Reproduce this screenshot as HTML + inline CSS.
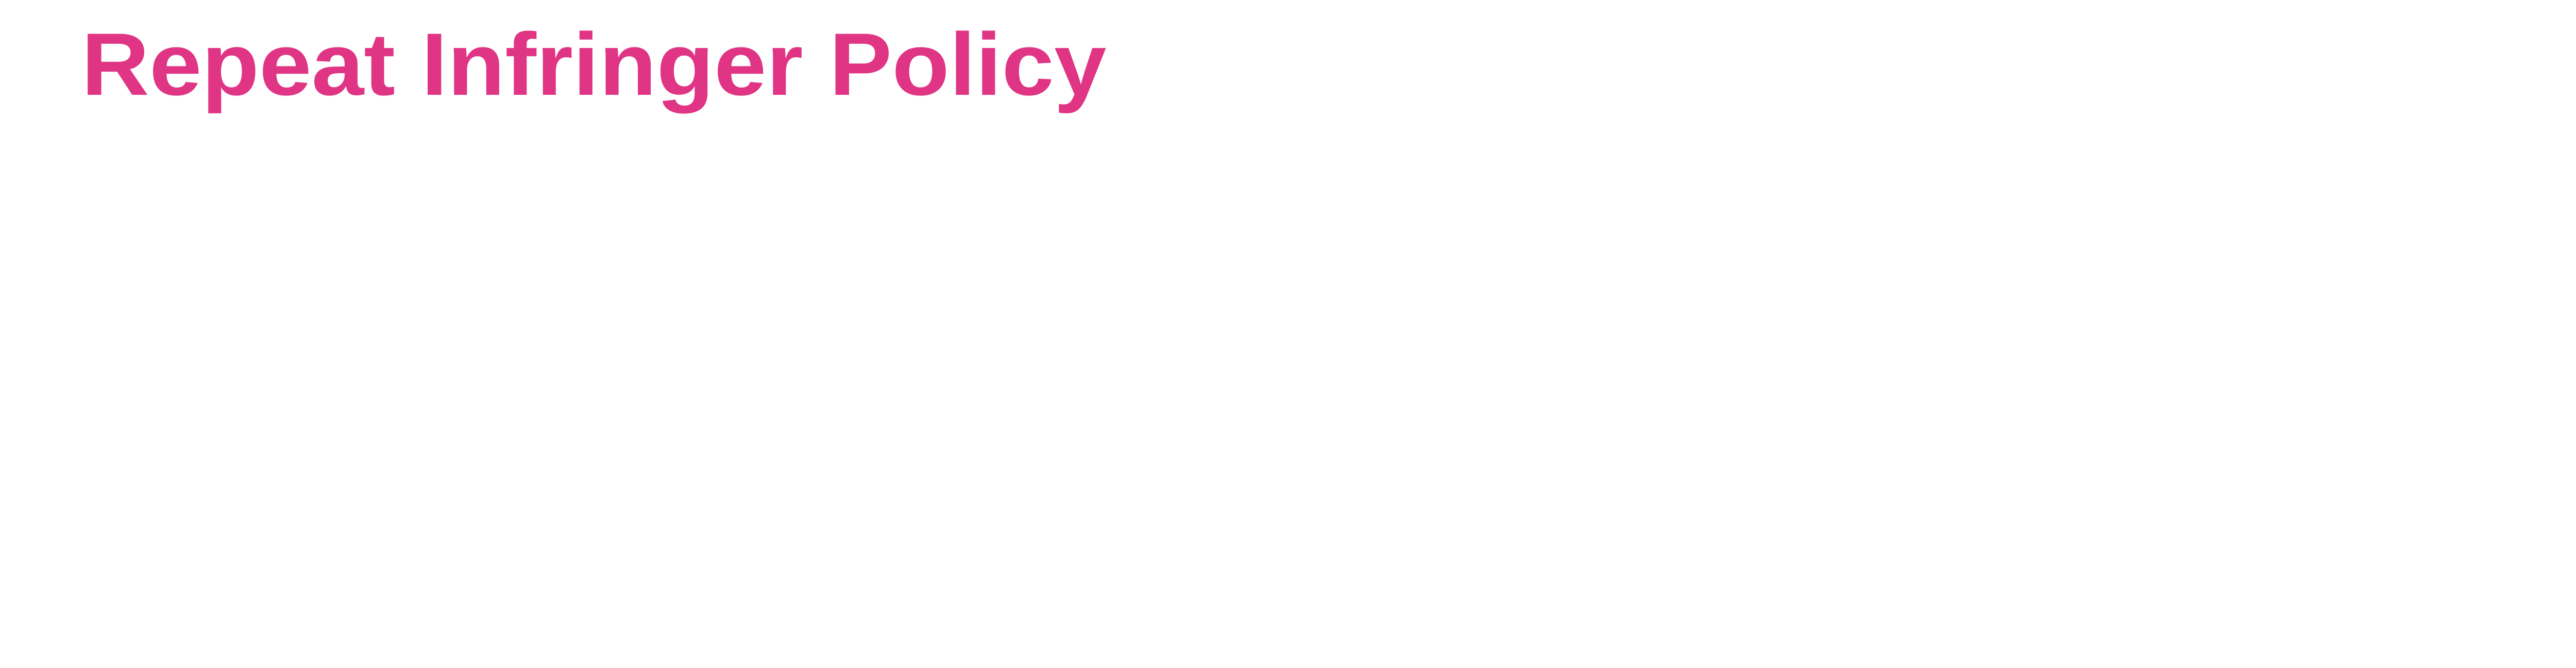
<!DOCTYPE html>
<html>
<head>
<meta charset="utf-8">
<style>
html,body{margin:0;padding:0;background:#fff;width:6000px;height:1296px;overflow:hidden;position:relative;}
.h{position:absolute;left:158px;top:39px;font-family:"Liberation Sans",Arial,sans-serif;font-weight:bold;font-size:172px;line-height:1;color:#e03584;white-space:nowrap;transform:scaleX(1.062);transform-origin:0 0;}
</style>
</head>
<body>
<div class="h">Repeat Infringer Policy</div>
</body>
</html>
